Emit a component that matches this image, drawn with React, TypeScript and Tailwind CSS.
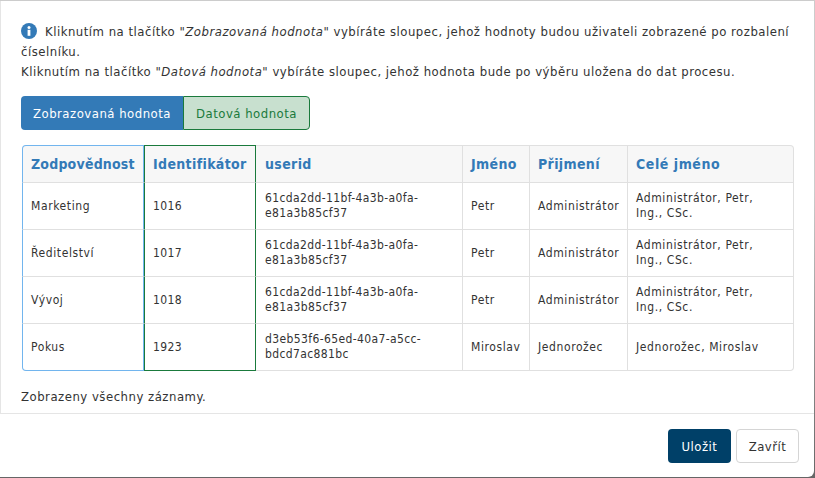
const rows = [
  ["Marketing", "1016", "61cda2dd-11bf-4a3b-a0fa-e81a3b85cf37", "Petr", "Administrátor", "Administrátor, Petr, Ing., CSc."],
  ["Ředitelství", "1017", "61cda2dd-11bf-4a3b-a0fa-e81a3b85cf37", "Petr", "Administrátor", "Administrátor, Petr, Ing., CSc."],
  ["Vývoj", "1018", "61cda2dd-11bf-4a3b-a0fa-e81a3b85cf37", "Petr", "Administrátor", "Administrátor, Petr, Ing., CSc."],
  ["Pokus", "1923", "d3eb53f6-65ed-40a7-a5cc-bdcd7ac881bc", "Miroslav", "Jednorožec", "Jednorožec, Miroslav"],
];
const heads = ["Zodpovědnost", "Identifikátor", "userid", "Jméno", "Přijmení", "Celé jméno"];
const widths = ["w-[122px]", "w-[112px]", "w-[207px]", "w-[67px]", "w-[98px]", "w-[166px]"];
const headTracking = ["tracking-[0.2px]", "tracking-[0.35px]", "tracking-[0.35px]", "tracking-[0.35px]", "tracking-[0.35px]", "tracking-[0.55px]"];

function cellClass(c: number, last: boolean, head: boolean) {
  const pad = c === 2 ? "pl-[9px] pr-2 " : c === 5 ? "pl-2 pr-[22px] " : "px-2 ";
  const base = pad + "border-b border-r align-middle ";
  const hd = head ? "h-[38px] bg-[#f7f7f7] border-t " : "h-[47px] ";
  if (c === 0) return base + hd + "border-l border-l-[#72b5ee] border-r-[#72b5ee] " + (head ? "border-t-[#72b5ee] rounded-tl-[4px] border-b-[#e0e0e0]" : last ? "border-b-[#72b5ee] rounded-bl-[4px]" : "border-b-[#e0e0e0]");
  if (c === 1) return base + hd + "border-l border-l-[#1a7a3c] border-r-[#1a7a3c] " + (head ? "border-t-[#1a7a3c] border-b-[#e0e0e0]" : last ? "border-b-[#1a7a3c]" : "border-b-[#e0e0e0]");
  return base + hd + "border-[#e0e0e0] " + (head && c === 5 ? "rounded-tr-[4px]" : "") + (last && c === 5 ? "rounded-br-[4px]" : "");
}

export default function App() {
  return (
    <div className="w-[815px] h-[478px] overflow-hidden bg-linear-to-b from-[#cccccc] from-40% to-[#666666] font-['DejaVu_Sans_Condensed',sans-serif] text-[13px] tracking-[0.5px] text-[#333333]">
      <div className="w-[814px] h-[477px] bg-white rounded-br-[6px] border-t border-t-[#cccccc] flex flex-col">
        <div className="h-[413px] shrink-0 border-l border-b border-[#e5e5e5] pl-5 pr-5 pt-[21px]">
          <div className="leading-[20px] w-[776px]">
            <svg className="inline-block w-4 h-4 mr-[8px] align-[-3px]" viewBox="0 0 16 16">
              <circle cx="8" cy="8" r="8" fill="#337ab7" />
              <circle cx="8" cy="4.4" r="1.5" fill="#fff" />
              <rect x="6.6" y="6.8" width="2.8" height="6" fill="#fff" />
            </svg>
            Kliknutím na tlačítko <i>"Zobrazovaná hodnota"</i> vybíráte sloupec, jehož hodnoty budou uživateli zobrazené po rozbalení číselníku.
            <br />
            Kliknutím na tlačítko <i>"Datová hodnota"</i> vybíráte sloupec, jehož hodnota bude po výběru uložena do dat procesu.
          </div>
          <div className="flex mt-[14px] h-[34px]">
            <button className="w-[162px] pt-[1px] bg-[#337ab7] text-white rounded-l-[4px]">Zobrazovaná hodnota</button>
            <button className="w-[127px] pt-[1px] bg-[#c8e0cf] text-[#1a7a3c] border border-[#1a7a3c] rounded-r-[4px]">Datová hodnota</button>
          </div>
          <table className="mt-[15px] ml-[1px] table-fixed border-separate border-spacing-0 w-[772px] text-[12px] leading-[15px]">
            <thead>
              <tr>
                {heads.map((h, i) => (
                  <th key={h} className={widths[i] + " " + headTracking[i] + " text-left text-[14px] font-bold text-[#337ab7] " + cellClass(i, false, true)}>{h}</th>
                ))}
              </tr>
            </thead>
            <tbody>
              {rows.map((r, ri) => (
                <tr key={ri}>
                  {r.map((v, c) => (
                    <td key={c} className={(c === 1 || c === 2 ? "tracking-[0.38px] " : "tracking-[0.6px] ") + cellClass(c, ri === rows.length - 1, false)}>{v}</td>
                  ))}
                </tr>
              ))}
            </tbody>
          </table>
          <p className="mt-[16px] leading-[20px]">Zobrazeny všechny záznamy.</p>
        </div>
        <div className="flex justify-end gap-[5px] pt-[15px] pr-[15px]">
          <button className="w-[63px] h-[34px] pt-[1px] rounded-[4px] bg-[#004068] text-white">Uložit</button>
          <button className="w-[63px] h-[34px] pt-[1px] rounded-[4px] bg-white border border-[#d5d5d5]">Zavřít</button>
        </div>
      </div>
    </div>
  );
}
